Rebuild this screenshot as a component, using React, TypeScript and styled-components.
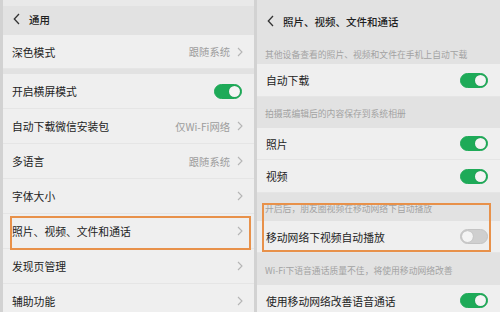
import React from "react";
import styled, { createGlobalStyle } from "styled-components";

const Global = createGlobalStyle`
  html, body { margin: 0; padding: 0; background: #d4d4d4; }
  body { font-family: "Noto Sans CJK SC", "Noto Sans", sans-serif; }
  * { box-sizing: border-box; }
`;

const Page = styled.div`
  width: 500px;
  height: 312px;
  display: flex;
  gap: 3px;
  overflow: hidden;
  background: #d2d2d2;
  padding-left: 3px;
`;

const Panel = styled.div<{ $w?: number }>`
  ${(p) => (p.$w ? `width: ${p.$w}px;` : "flex: 1;")}
  height: 312px;
  display: flex;
  flex-direction: column;
  background: #e2e2e2;
  overflow: hidden;
`;

const StatusStrip = styled.div`
  height: 6px;
  background: #e9e9e9;
  flex: none;
`;

const Header = styled.div<{ $h: number; $pb?: number }>`
  height: ${(p) => p.$h}px;
  flex: none;
  display: flex;
  align-items: center;
  gap: 9px;
  padding-left: 10px;
  padding-bottom: ${(p) => p.$pb ?? 0}px;
  font-size: 10.5px;
  font-weight: 500;
  color: #1f1f1f;
`;

const Row = styled.div<{ $h: number; $mark?: boolean; $markBox?: string }>`
  position: relative;
  height: ${(p) => p.$h}px;
  flex: none;
  display: flex;
  align-items: center;
  padding: 0 9px 0 9px;
  background: #efefef;
  border-bottom: 1px solid #e5e5e5;
  font-size: 10.8px;
  color: #232323;
  ${(p) =>
    p.$mark
      ? `&::after {
      content: "";
      position: absolute;
      ${p.$markBox};
      border: 2px solid #e8914a;
      pointer-events: none;
      z-index: 2;
    }`
      : ""}
`;

const Label = styled.span`
  flex: 1;
  white-space: nowrap;
`;

const Value = styled.span`
  color: #9d9d9d;
  font-size: 10.3px;
  margin-right: 7px;
  white-space: nowrap;
`;

const Gap = styled.div<{ $h: number }>`
  height: ${(p) => p.$h}px;
  flex: none;
`;

const Caption = styled.div<{ $h: number }>`
  height: ${(p) => p.$h}px;
  flex: none;
  display: flex;
  align-items: center;
  padding-left: 8px;
  padding-top: 2px;
  font-size: 8.8px;
  color: #a3a3a3;
  white-space: nowrap;
`;

const Toggle = styled.div<{ $on: boolean }>`
  width: 28px;
  height: 15px;
  border-radius: 8px;
  margin-right: 3px;
  position: relative;
  background: ${(p) => (p.$on ? "#1eaa58" : "#cfcfcf")};
  border: 1px solid ${(p) => (p.$on ? "#1eaa58" : "#c4c4c4")};
  flex: none;
  &::after {
    content: "";
    position: absolute;
    top: 1px;
    ${(p) => (p.$on ? "right: 1px;" : "left: 1px;")}
    width: 11px;
    height: 11px;
    border-radius: 50%;
    background: #f4f4f4;
    box-shadow: 0 0 1px rgba(0, 0, 0, 0.25);
  }
`;

const MarkBox = styled.div`
  position: relative;
  flex: none;
  &::after {
    content: "";
    position: absolute;
    left: 5px;
    right: 9px;
    top: 10px;
    bottom: 1px;
    border: 2px solid #e8914a;
    pointer-events: none;
  }
`;

const Chevron = () => (
  <svg width="6" height="10" viewBox="0 0 6 10" style={{ flex: "none", marginRight: 2 }}>
    <polyline points="1,1 5,5 1,9" fill="none" stroke="#b5b5b5" strokeWidth="1.1" />
  </svg>
);

const Back = () => (
  <svg width="7" height="12" viewBox="0 0 7 12" style={{ flex: "none" }}>
    <polyline points="6,1 1.3,6 6,11" fill="none" stroke="#333" strokeWidth="1.3" />
  </svg>
);

export default function App() {
  return (
    <>
      <Global />
      <Page>
        <Panel $w={251}>
          <StatusStrip />
          <Header $h={29} $pb={3}>
            <Back />
            <span>通用</span>
          </Header>
          <Row $h={34}>
            <Label>深色模式</Label>
            <Value>跟随系统</Value>
            <Chevron />
          </Row>
          <Gap $h={5} />
          <Row $h={35}>
            <Label>开启横屏模式</Label>
            <Toggle $on />
          </Row>
          <Row $h={35}>
            <Label>自动下载微信安装包</Label>
            <Value>仅Wi-Fi网络</Value>
            <Chevron />
          </Row>
          <Row $h={35}>
            <Label>多语言</Label>
            <Value>跟随系统</Value>
            <Chevron />
          </Row>
          <Row $h={35}>
            <Label>字体大小</Label>
            <Chevron />
          </Row>
          <Row $h={35} $mark $markBox="left: 7px; right: 3px; top: 2px; bottom: -2px;">
            <Label>照片、视频、文件和通话</Label>
            <Chevron />
          </Row>
          <Row $h={35}>
            <Label>发现页管理</Label>
            <Chevron />
          </Row>
          <Row $h={35}>
            <Label>辅助功能</Label>
            <Chevron />
          </Row>
        </Panel>
        <Panel>
          <Header $h={42}>
            <Back />
            <span>照片、视频、文件和通话</span>
          </Header>
          <Caption $h={22}>其他设备查看的照片、视频和文件在手机上自动下载</Caption>
          <Row $h={33}>
            <Label>自动下载</Label>
            <Toggle $on />
          </Row>
          <Caption $h={31}>拍摄或编辑后的内容保存到系统相册</Caption>
          <Row $h={32}>
            <Label>照片</Label>
            <Toggle $on />
          </Row>
          <Row $h={33}>
            <Label>视频</Label>
            <Toggle $on />
          </Row>
          <MarkBox>
            <Caption $h={28}>开启后，朋友圈视频在移动网络下自动播放</Caption>
            <Row $h={32}>
              <Label>移动网络下视频自动播放</Label>
              <Toggle $on={false} />
            </Row>
          </MarkBox>
          <Caption $h={32}>Wi-Fi下语音通话质量不佳，将使用移动网络改善</Caption>
          <Row $h={32}>
            <Label>使用移动网络改善语音通话</Label>
            <Toggle $on />
          </Row>
        </Panel>
      </Page>
    </>
  );
}
